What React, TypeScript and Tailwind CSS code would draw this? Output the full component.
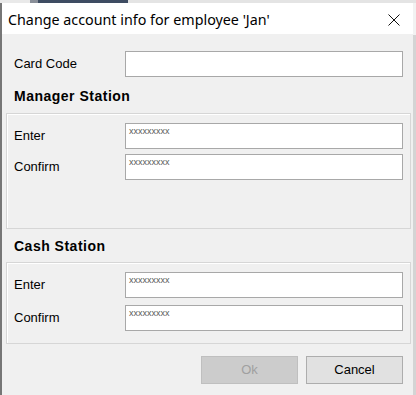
import React from "react";

function Field({ value }: { value?: string }) {
  return (
    <div className="h-[26px] w-[278px] bg-white border border-[#a8a8a8] pl-[3px] pt-[3px]">
      {value ? (
        <span className="block text-[9px] leading-[9px] text-[#5a5a5a]">{value}</span>
      ) : null}
    </div>
  );
}

function Row({ label, value }: { label: string; value?: string }) {
  return (
    <div className="grid grid-cols-[111px_278px] items-start">
      <span className="mt-[5px] text-[13px] leading-[15px] text-black">{label}</span>
      <Field value={value} />
    </div>
  );
}

export default function App() {
  return (
    <div
      className="w-[416px] h-[395px] overflow-hidden flex flex-col bg-[#d9d9d9]"
      style={{ fontFamily: '"Liberation Sans", Arial, sans-serif' }}
    >
      <div className="h-[3px] flex shrink-0">
        <div className="w-[30px] bg-[#e9e9e9]" />
        <div className="w-[8px] bg-[#8a8f99]" />
        <div className="w-[90px] bg-[#3e4c62]" />
        <div className="flex-1 bg-[#e4e4e4]" />
      </div>
      <div className="flex flex-1 min-h-0">
        <div className="w-[2px] bg-[#767676]" />
        <div className="w-[411px] flex flex-col bg-[#f0f0f0]">
          <div className="h-[31px] shrink-0 bg-white flex items-center justify-between pl-[6px] pr-[13px] pt-[3px]">
            <span
              className="text-[14.3px] text-black leading-none"
              style={{ fontFamily: '"Noto Sans", "Open Sans", sans-serif' }}
            >
              Change account info for employee 'Jan'
            </span>
            <svg width="12" height="12" viewBox="0 0 12 12">
              <path d="M0.5 0.5 L11.5 11.5 M11.5 0.5 L0.5 11.5" stroke="#111" strokeWidth="1" fill="none" />
            </svg>
          </div>

          <div className="flex flex-col pt-[17px]">
            <div className="pl-[12px]">
              <Row label="Card Code" />
            </div>

            <div className="mt-[9px] h-[21px] pl-[12px] text-[14px] leading-[21px] font-bold tracking-[0.5px] text-black">
              Manager Station
            </div>

            <div className="mt-[6px] ml-[4px] w-[405px] h-[116px] border border-[#d6d6d6] shadow-[inset_1px_1px_0_#ffffff] pl-[7px] pt-[9px] flex flex-col gap-[5px]">
              <Row label="Enter" value="xxxxxxxxx" />
              <Row label="Confirm" value="xxxxxxxxx" />
            </div>

            <div className="mt-[7px] h-[21px] pl-[12px] text-[14px] leading-[21px] font-bold tracking-[0.5px] text-black">
              Cash Station
            </div>

            <div className="mt-[5px] ml-[4px] w-[405px] h-[82px] border border-[#d6d6d6] shadow-[inset_1px_1px_0_#ffffff] pl-[7px] pt-[9px] flex flex-col gap-[7px]">
              <Row label="Enter" value="xxxxxxxxx" />
              <Row label="Confirm" value="xxxxxxxxx" />
            </div>

            <div className="mt-[12px] flex justify-end gap-[8px] pr-[10px]">
              <div className="w-[97px] h-[28px] bg-[#cccccc] border border-[#bfbfbf] flex items-center justify-center text-[13px] text-[#a0a0a0]">
                Ok
              </div>
              <div className="w-[97px] h-[28px] bg-[#e1e1e1] border border-[#adadad] flex items-center justify-center text-[13px] text-black">
                Cancel
              </div>
            </div>
          </div>
        </div>
        <div className="w-[3px] flex flex-col">
          <div className="h-[32px] bg-[#f2f2f2]" />
          <div className="flex-1 bg-[#d4d4d4]" />
        </div>
      </div>
    </div>
  );
}
